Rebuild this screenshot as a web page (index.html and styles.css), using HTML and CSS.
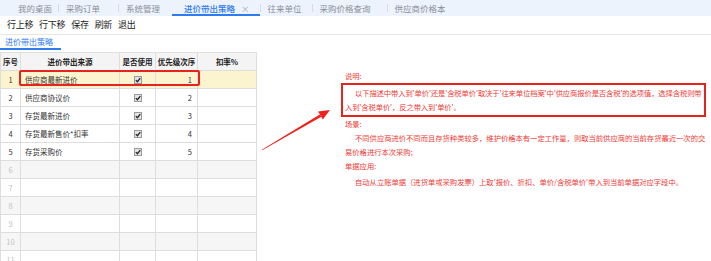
FILE: index.html
```html
<!DOCTYPE html>
<html lang="zh-CN">
<head>
  <meta charset="UTF-8">
  <title>进价带出策略</title>
  <link rel="stylesheet" href="styles.css">
</head>
<body>

  <!-- 顶部标签页 -->
  <div class="tabs">
    <span class="tab">我的桌面</span>
    <span class="tab">采购订单</span>
    <span class="tab">系统管理</span>
    <span class="tab active">进价带出策略<i class="close">×</i></span>
    <span class="tab">往来单位</span>
    <span class="tab">采购价格查询</span>
    <span class="tab">供应商价格本</span>
  </div>

  <div class="toolbar">
    <a>行上移</a>
    <a>行下移</a>
    <a>保存</a>
    <a>刷新</a>
    <a>退出</a>
  </div>

  <div class="subtabs">
    <span class="subtab">进价带出策略</span>
  </div>

  <div class="main">
    <div class="grid-wrap">
      <table class="grid">
        <colgroup>
          <col class="c-no"><col class="c-src"><col class="c-use"><col class="c-ord"><col class="c-rate">
        </colgroup>
        <thead>
          <tr><th>序号</th><th>进价带出来源</th><th>是否使用</th><th>优先级次序</th><th>扣率%</th></tr>
        </thead>
        <tbody id="grid-body"></tbody>
      </table>
      <div class="mark"></div>
    </div>

    <div class="notes">
      <p>说明:</p>
      <div class="note-box">
        <p class="indent">以下描述中带入到'单价'还是'含税单价'取决于'往来单位档案'中'供应商报价是否含税'的选项值，选择含税则带<br>入到'含税单价'，反之带入到'单价'。</p>
      </div>
      <p>场景:</p>
      <p class="indent">不同供应商进价不同而且存货种类较多，维护价格本有一定工作量，则取当前供应商的当前存货最近一次的交<br>易价格进行本次采购;</p>
      <p>单据应用:</p>
      <p class="indent last">自动从立账单据（进货单或采购发票）上取'报价、折扣、单价/含税单价'带入到当前单据对应字段中。</p>
    </div>

    <svg class="arrow" width="80" height="55" viewBox="0 0 80 55">
      <polygon points="7.2,48.3 6.8,47.7 64.8,12.4 66.3,14.8" fill="#f0201c"/>
      <polygon points="75,8 67.8,17.6 63.1,9.6" fill="#f0201c"/>
    </svg>
  </div>

  <script>
    const rows = [
      { name: '供应商最新进价', order: 1 },
      { name: '供应商协议价', order: 2 },
      { name: '存货最新进价', order: 3 },
      { name: '存货最新售价*扣率', order: 4 },
      { name: '存货采购价', order: 5 }
    ];
    const check = '<svg class="chk" width="8" height="8" viewBox="0 0 8 8"><rect x="0.5" y="0.5" width="7" height="7" fill="#e4e4e4" stroke="#9a9a9a"/><path d="M1.8 4.1 L3.4 5.7 L6.3 2.1" fill="none" stroke="#222" stroke-width="1.3"/></svg>';
    const body = document.getElementById('grid-body');

    for (let i = 1; i <= 11; i++) {
      const r = rows[i - 1];
      const tr = document.createElement('tr');
      if (i === 1) tr.className = 'current';
      if (!r) tr.className = i % 2 === 0 ? 'empty odd' : 'empty';
      tr.innerHTML = r
        ? `<td class="no">${i}</td><td class="src">${r.name}</td><td class="use">${check}</td><td class="ord">${r.order}</td><td></td>`
        : `<td class="no">${i}</td><td></td><td></td><td></td><td></td>`;
      body.appendChild(tr);
    }
  </script>

</body>
</html>
```

FILE: styles.css
```css
body {
  margin: 0;
  font-family: "Noto Sans CJK SC", "Noto Sans", sans-serif;
  color: #333;
  background: #fff;
}

p {
  margin: 0;
}

/* 顶部标签页 */
.tabs {
  display: flex;
  height: 16px;
  padding-left: 10px;
  background-color: #edf3fc;
  font-size: 8.5px;
  line-height: 16px;
  color: #8a8f99;
  white-space: nowrap;
}

.tab {
  position: relative;
  padding: 0 10px 0 8px;
}

.tab:nth-child(1) { padding-right: 6px; }
.tab:nth-child(2) { padding-right: 18px; }
.tab:nth-child(3) { padding-right: 12px; }
.tab:nth-child(4) { padding-left: 12px; }
.tab:nth-child(6) { padding-right: 16px; }

.tab + .tab::before {
  content: "";
  position: absolute;
  left: 0;
  top: 4px;
  height: 8px;
  border-left: 1px solid #d6dbe4;
}

.tab.active {
  color: #2f7cf0;
  font-weight: 500;
  box-shadow: inset 0 -2px 0 #2f7cf0;
}

.tab.active::before {
  display: none;
}

.close {
  font-style: normal;
  color: #aab0ba;
  margin-left: 6px;
  font-weight: normal;
}

.toolbar {
  display: flex;
  gap: 6px;
  height: 18px;
  padding-left: 7px;
  font-size: 9px;
  letter-spacing: -0.3px;
  line-height: 18px;
  color: #222;
  border-bottom: 1px solid #e6e6e6;
}

.subtabs {
  display: flex;
  align-items: flex-start;
  height: 15px;
  margin-bottom: 2px;
}

.subtab {
  display: block;
  padding: 0 8px 0 5px;
  font-size: 8px;
  line-height: 13px;
  color: #2f7cf0;
  border-bottom: 2px solid #2f7cf0;
}

/* 表格区域 */
.main {
  position: relative;
  display: flex;
}

.grid-wrap {
  position: relative;
  width: 257px;
  flex: none;
}

.grid {
  width: 257px;
  table-layout: fixed;
  border-collapse: collapse;
  font-size: 7.5px;
  color: #333;
}

.c-no { width: 20px; }
.c-src { width: 99px; }
.c-use { width: 36px; }
.c-ord { width: 42px; }

.grid th,
.grid td {
  height: 17px;
  padding: 0;
  border: 1px solid #dedede;
  white-space: nowrap;
  overflow: hidden;
}

.grid th {
  font-weight: bold;
  color: #222;
  background-color: #f4f4f4;
  text-align: center;
}

.grid td.no {
  text-align: center;
}

.grid td.src {
  padding-left: 4px;
}

.grid td.use {
  text-align: center;
  line-height: 0;
}

.grid td.ord {
  text-align: right;
  padding-right: 5px;
}

.grid tr.current td {
  background-color: #fcf4cf;
}

.grid tr.empty td.no {
  color: #c4c4c4;
}

.grid tr.odd td {
  background-color: #f6f6f6;
}

.mark {
  position: absolute;
  left: 19px;
  top: 18px;
  width: 181px;
  height: 16px;
  box-sizing: border-box;
  border: 2px solid #e8231d;
  border-radius: 2px;
}

/* 右侧说明 */
.notes {
  flex: none;
  margin: 17px 0 0 86px;
  font-size: 7.3px;
  line-height: 14px;
  color: #ee3a35;
  white-space: nowrap;
}

.notes p {
  padding-left: 2px;
}

.notes .indent {
  text-indent: 10px;
}

.notes .last {
  margin-top: 2px;
}

.note-box {
  width: 365px;
  box-sizing: border-box;
  padding: 1px 0;
  margin-left: -2px;
  border: 2px solid #e8231d;
  letter-spacing: -0.1px;
}

.arrow {
  position: absolute;
  left: 255px;
  top: 50px;
}
```
